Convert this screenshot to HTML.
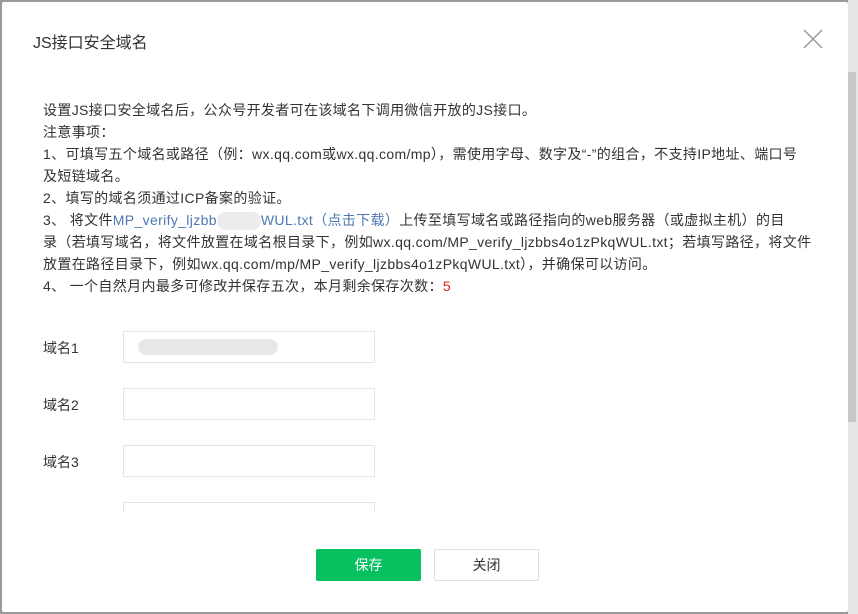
<!DOCTYPE html>
<html><head><meta charset="utf-8"><style>
body{margin:0;width:858px;height:614px;overflow:hidden;background:#9a9a9a;font-family:"Liberation Sans","Noto Sans CJK SC",sans-serif;position:relative}
.dlg{position:absolute;left:2px;top:2px;width:846px;height:610px;background:#fff;border-radius:2px}
.sb{position:absolute;left:848px;top:0;width:10px;height:614px;background:#e6e6e6}
.thumb{position:absolute;left:848px;top:72px;width:8px;height:350px;background:#c8c8c8}
.title{position:absolute;left:31px;top:27px;font-size:16px;color:#333}
.x{position:absolute;left:800px;top:26px}
.txt{position:absolute;left:41px;top:97px;width:790px;font-size:14px;line-height:22px;color:#333;white-space:nowrap;letter-spacing:0.35px}
a{color:#4d78b3;text-decoration:none}
.blur{display:inline-block;width:44px;height:18px;background:#ececec;border-radius:9px;vertical-align:middle}
.lab{position:absolute;left:41px;font-size:14px;color:#333}
.in{position:absolute;left:121px;width:250px;height:30px;border:1px solid #e4e4e4;background:#fff}
.clip{position:absolute;left:0;width:846px;height:30px;background:#fff}
.btn{position:absolute;width:105px;height:32px;font-size:14px;line-height:32px;text-align:center;border-radius:2px}
</style></head><body>
<div class="sb"></div><div class="thumb"></div>
<div class="dlg">
<div class="title">JS接口安全域名</div>
<svg class="x" width="22" height="22" viewBox="0 0 22 22"><path d="M2 2L20 20M20 2L2 20" stroke="#999" stroke-width="1.5"/></svg>
<div class="txt">设置JS接口安全域名后，公众号开发者可在该域名下调用微信开放的JS接口。<br>注意事项：<br>1、可填写五个域名或路径（例：wx.qq.com或wx.qq.com/mp），需使用字母、数字及“-”的组合，不支持IP地址、端口号<br>及短链域名。<br>2、填写的域名须通过ICP备案的验证。<br>3、 将文件<a>MP_verify_ljzbb<span class="blur"></span>WUL.txt（点击下载）</a>上传至填写域名或路径指向的web服务器（或虚拟主机）的目<br>录（若填写域名，将文件放置在域名根目录下，例如wx.qq.com/MP_verify_ljzbbs4o1zPkqWUL.txt；若填写路径，将文件<br>放置在路径目录下，例如wx.qq.com/mp/MP_verify_ljzbbs4o1zPkqWUL.txt），并确保可以访问。<br>4、 一个自然月内最多可修改并保存五次，本月剩余保存次数：<span style="color:#e02020">5</span></div>
<div class="lab" style="top:336px">域名1</div><div class="in" style="top:329px"><div style="position:absolute;left:14px;top:7px;width:140px;height:16px;background:#e8e8e8;border-radius:8px"></div></div>
<div class="lab" style="top:393px">域名2</div><div class="in" style="top:386px"></div>
<div class="lab" style="top:450px">域名3</div><div class="in" style="top:443px"></div>
<div class="lab" style="top:507px">域名4</div><div class="in" style="top:500px"></div>
<div class="clip" style="top:509px"></div>
<div class="btn" style="left:314px;background:#07c160;color:#fff;top:547px">保存</div>
<div class="btn" style="left:432px;border:1px solid #e0e0e0;color:#333;width:103px;height:30px;line-height:30px;top:547px">关闭</div>
</div>
</body></html>
